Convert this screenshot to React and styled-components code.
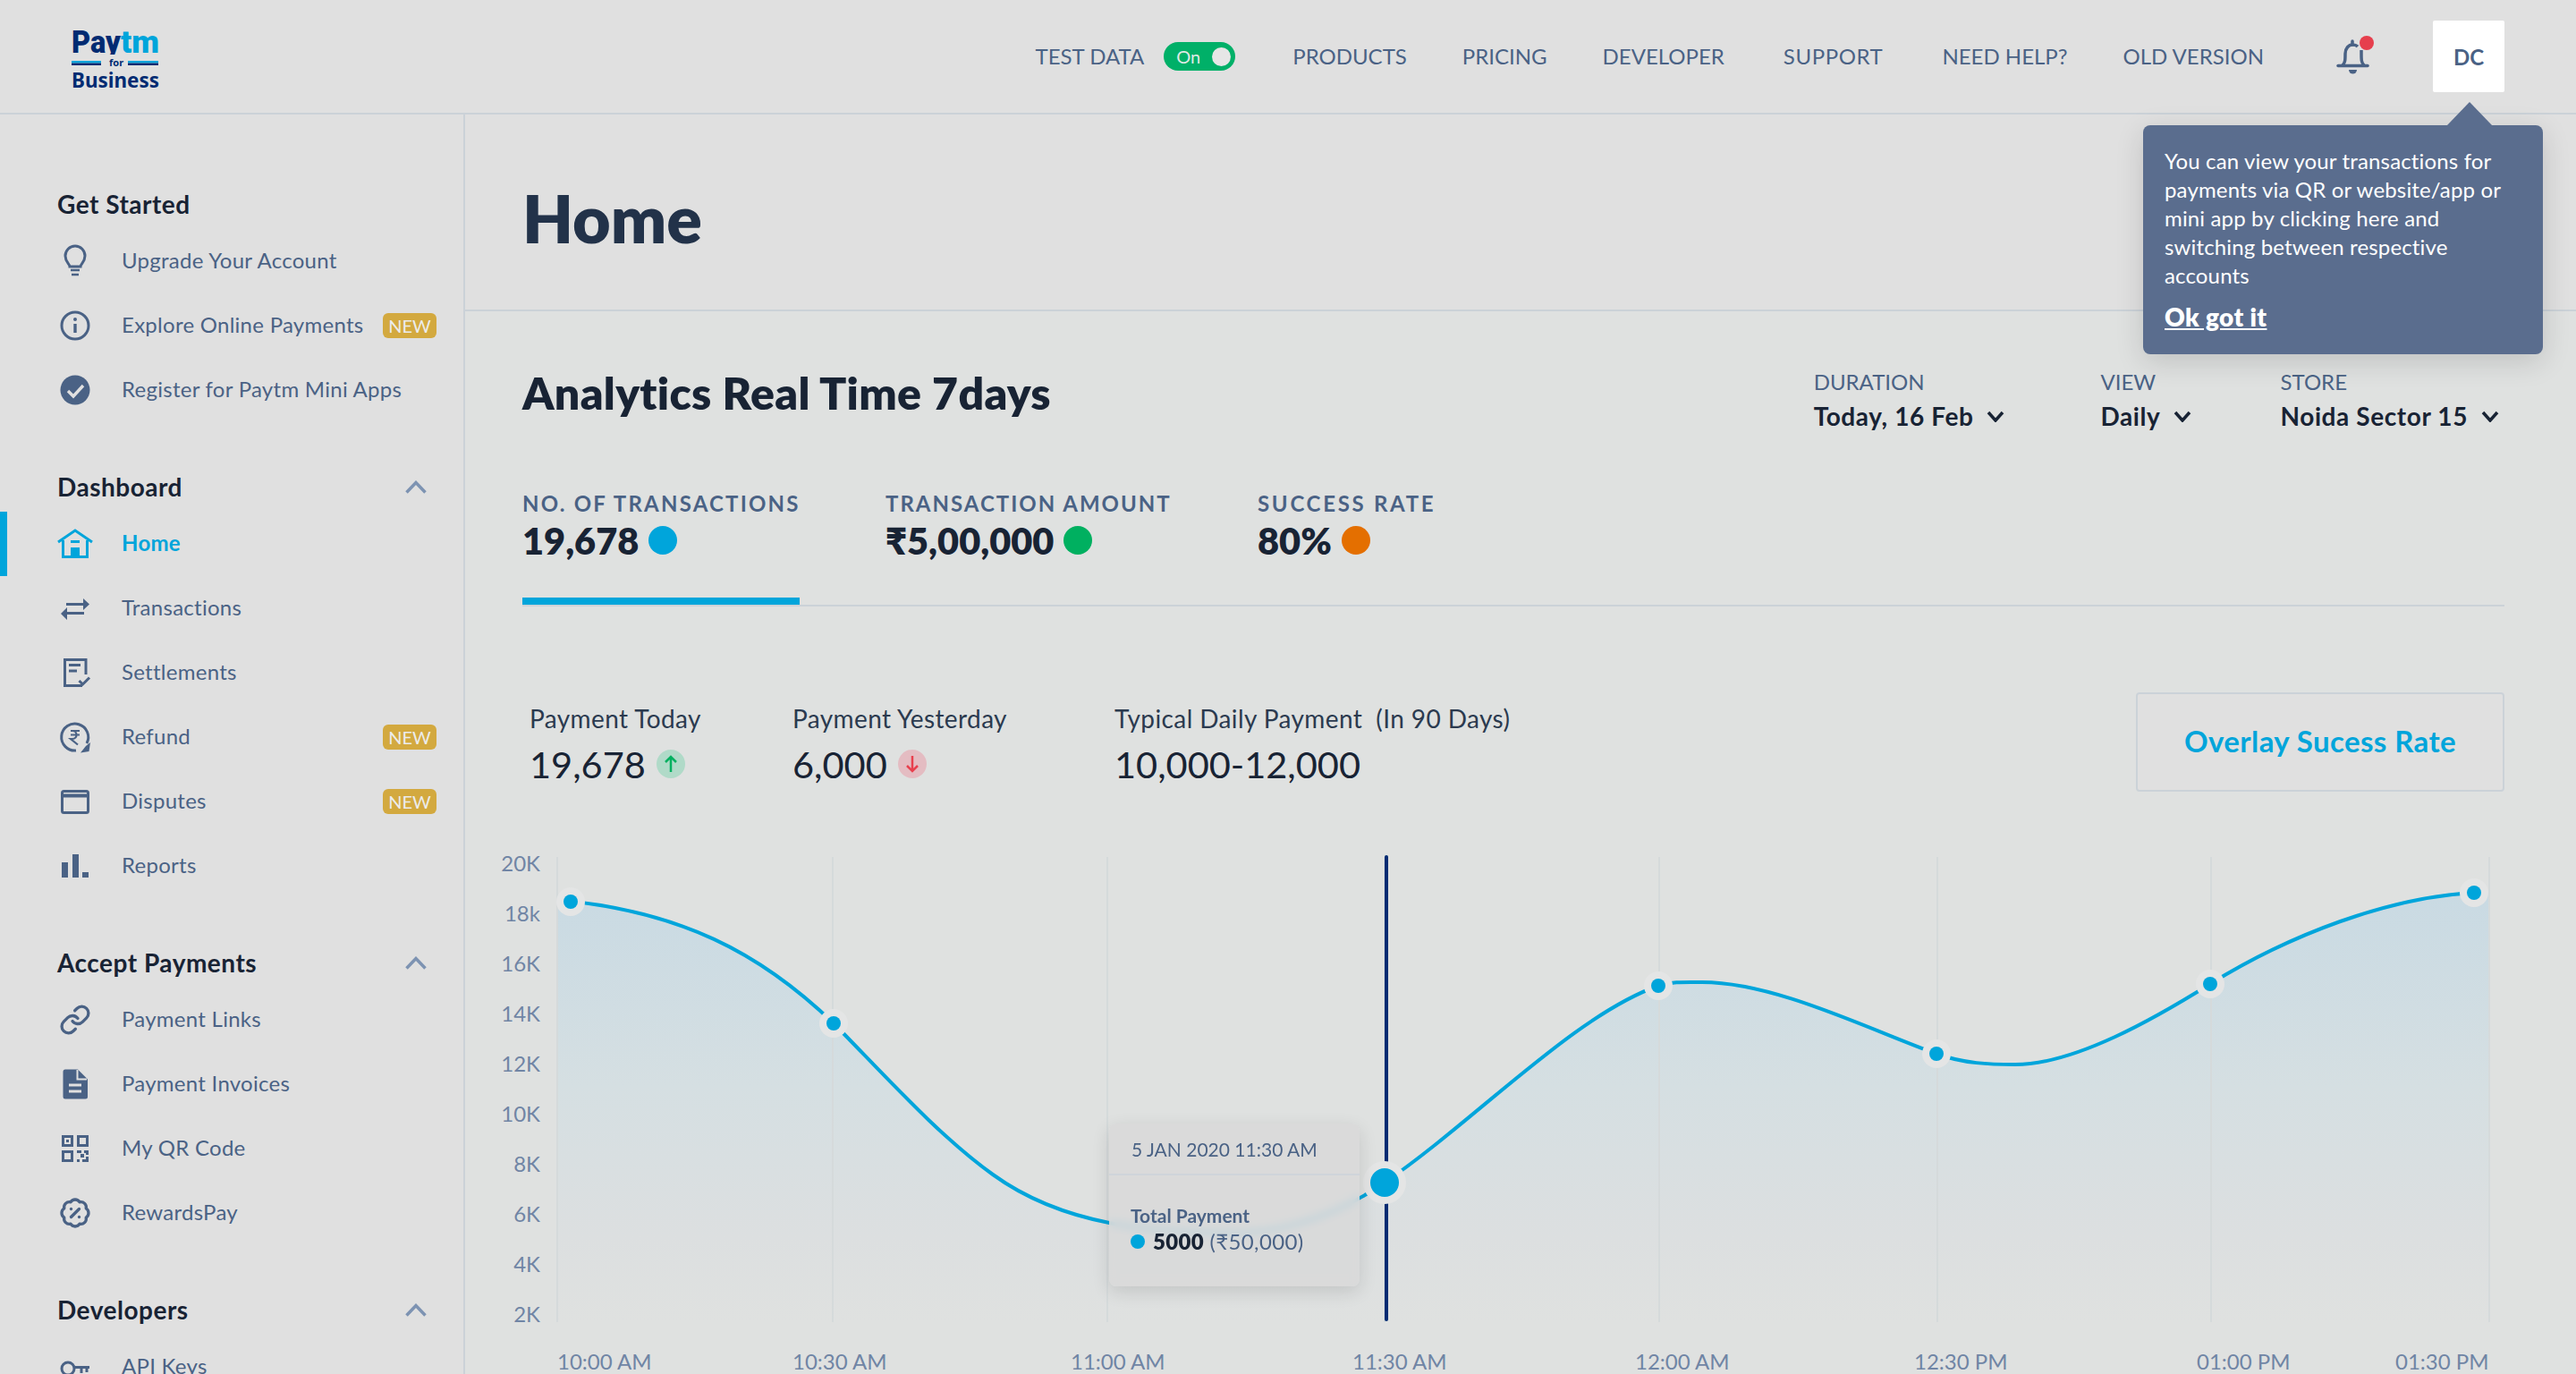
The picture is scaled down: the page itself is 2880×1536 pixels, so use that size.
import React from "react";
import styled, { createGlobalStyle } from "styled-components";
import { BadgePercent, Link as LinkIcon } from "lucide-react";

const FONT = `"Lato", "Noto Sans", "Liberation Sans", sans-serif`;
const SLATE = "#4a6285";
const INK = "#182334";
const BLUE = "#00a5db";
const NAVY = "#012b72";
const RULE = "#cbd2d8";

const GlobalStyle = createGlobalStyle`
  html, body {
    margin: 0;
    height: 1536px;
    overflow: hidden;
    background: #e0e0e0;
    font-family: ${FONT};
  }
  * { box-sizing: border-box; }
`;

const Page = styled.div`
  position: relative;
  width: 2880px;
  height: 1536px;
  overflow: hidden;
  background: #e0e0e0;
`;

/* ---------- top bar ---------- */

const TopBar = styled.header`
  display: flex;
  align-items: center;
  height: 128px;
  padding: 0 80px;
  border-bottom: 2px solid ${RULE};
`;

const LogoMark = styled.svg`
  display: block;
  width: 100px;
  height: 88px;
  margin-top: 4px;
`;

const NavLinks = styled.nav`
  display: flex;
  align-items: center;
  gap: 62px;
  margin-left: auto;
`;

const NavItem = styled.span`
  margin-left: ${(p) => p.$ml || 0}px;
  font-size: 24px;
  line-height: 32px;
  color: ${SLATE};
  letter-spacing: ${(p) => p.$ls || 0}px;
  white-space: nowrap;
`;

const TestData = styled.div`
  display: flex;
  align-items: center;
  gap: 22px;
`;

const Toggle = styled.div`
  display: flex;
  align-items: center;
  justify-content: space-between;
  width: 80px;
  height: 32px;
  padding: 0 5px 0 14px;
  border-radius: 16px;
  background: #00b068;
  color: #dfe9e4;
  font-size: 20px;

  &::after {
    content: "";
    width: 21px;
    height: 21px;
    border-radius: 50%;
    background: #e6e6e6;
  }
`;

const BellWrap = styled.div`
  display: flex;
  margin-left: 81px;
`;

const Avatar = styled.div`
  display: flex;
  align-items: center;
  justify-content: center;
  width: 80px;
  height: 80px;
  margin-left: 64px;
  border-radius: 2px;
  background: #fff;
  color: ${SLATE};
  font-size: 24px;
  font-weight: 700;
`;

/* ---------- coach mark ---------- */

const CoachMark = styled.aside`
  position: absolute;
  top: 140px;
  left: 2396px;
  width: 447px;
  height: 256px;
  padding: 24px;
  border-radius: 8px;
  background: #5a6d8e;
  color: #fff;
  font-size: 24px;
  line-height: 32px;
  letter-spacing: 0.15px;
  box-shadow: 0 8px 32px rgba(0, 0, 0, 0.14);

  &::before {
    content: "";
    position: absolute;
    top: -26px;
    left: 340px;
    border-left: 25px solid transparent;
    border-right: 25px solid transparent;
    border-bottom: 26px solid #5a6d8e;
  }
`;

const CoachLink = styled.a`
  display: block;
  margin-top: 14px;
  font-size: 28px;
  font-weight: 800;
  letter-spacing: 0.4px;
  color: #fff;
  text-decoration: underline;
`;

/* ---------- sidebar ---------- */

const Body = styled.div`
  display: flex;
  height: 1408px;
`;

const Sidebar = styled.aside`
  flex: none;
  width: 520px;
  padding-top: 82px;
  border-right: 2px solid ${RULE};
`;

const Section = styled.section`
  margin-bottom: 54px;
`;

const SectionTitle = styled.h3`
  display: flex;
  align-items: center;
  justify-content: space-between;
  height: 36px;
  margin: 0 0 10px;
  padding: 0 41px 0 64px;
  font-size: 28px;
  font-weight: 700;
  letter-spacing: 0.5px;
  color: ${INK};
`;

const MenuRow = styled.div`
  display: flex;
  align-items: center;
  height: 72px;
  padding: 0 30px 0 64px;
  box-shadow: ${(p) => (p.$active ? `inset 8px 0 0 ${BLUE}` : "none")};
  color: ${(p) => (p.$active ? BLUE : SLATE)};
  font-size: 24px;
  font-weight: ${(p) => (p.$active ? 700 : 400)};
`;

const MenuIcon = styled.span`
  flex: none;
  display: flex;
  align-items: center;
  justify-content: center;
  width: 40px;
  height: 40px;
  margin-right: 32px;
`;

const MenuLabel = styled.span`
  padding-bottom: 3px;
  letter-spacing: 0.27px;
  white-space: nowrap;
`;

const NewBadge = styled.span`
  flex: none;
  width: 60px;
  height: 28px;
  margin-left: auto;
  border-radius: 6px;
  background: #d3a93f;
  color: #ececec;
  font-size: 20px;
  font-weight: 400;
  line-height: 28px;
  text-align: center;
`;

const Icon = styled.svg`
  display: block;
  width: 40px;
  height: 40px;
  fill: none;
  stroke: currentColor;
  stroke-width: 3;
`;

/* ---------- main ---------- */

const Main = styled.main`
  flex: 1;
  min-width: 0;
  background: #dfe1e0;
`;

const TitleBar = styled.div`
  display: flex;
  align-items: center;
  height: 220px;
  padding: 12px 0 0 64px;
  border-bottom: 2px solid ${RULE};
  background: #e0e0e0;
`;

const PageTitle = styled.h1`
  margin: 0;
  font-size: 73.5px;
  font-weight: 800;
  color: #223249;
`;

const Content = styled.div`
  padding: 63px 80px 0 64px;
`;

const AnalyticsHead = styled.div`
  display: flex;
  align-items: flex-start;
  justify-content: space-between;
`;

const AnalyticsTitle = styled.h2`
  margin: 0;
  font-size: 50px;
  line-height: 56px;
  font-weight: 800;
  letter-spacing: 0.3px;
  color: ${INK};
`;

const Filters = styled.div`
  display: flex;
  padding-right: 6px;
`;

const Filter = styled.div`
  margin-right: ${(p) => p.$mr || 0}px;
`;

const FilterLabel = styled.div`
  font-size: 24px;
  line-height: 32px;
  color: ${SLATE};
  margin-bottom: 2px;
`;

const FilterValue = styled.div`
  display: flex;
  align-items: center;
  gap: 15px;
  font-size: 28px;
  line-height: 40px;
  font-weight: 700;
  letter-spacing: 0.6px;
  color: ${INK};
`;

const Chevron = styled.svg`
  display: block;
  width: ${(p) => p.$w}px;
  height: ${(p) => p.$h}px;
  fill: none;
  stroke: ${(p) => p.$color};
  stroke-width: 3.5;
`;

const Tabs = styled.div`
  display: flex;
  margin-top: 62px;
  border-bottom: 2px solid ${RULE};
`;

const Tab = styled.div`
  width: ${(p) => p.$w}px;
`;

const TabInner = styled.div`
  width: ${(p) => (p.$active ? "310px" : "auto")};
  padding-bottom: ${(p) => (p.$active ? 40 : 48)}px;
  border-bottom: ${(p) => (p.$active ? `8px solid ${BLUE}` : "none")};
`;

const TabLabel = styled.div`
  font-size: 24px;
  line-height: 32px;
  font-weight: 700;
  letter-spacing: ${(p) => p.$ls}px;
  color: ${SLATE};
  white-space: nowrap;
`;

const TabValue = styled.div`
  display: flex;
  align-items: center;
  gap: 11px;
  margin-top: 1px;
  font-size: 41.5px;
  line-height: 48px;
  font-weight: 800;
  color: ${INK};
`;

const Dot = styled.span`
  flex: none;
  width: 32px;
  height: 32px;
  border-radius: 50%;
  background: ${(p) => p.$color};
`;

const PaymentRow = styled.div`
  display: flex;
  justify-content: space-between;
  margin-top: 96px;
`;

const PaymentStats = styled.div`
  display: grid;
  grid-template-columns: 294px 360px auto;
  padding: 11px 0 0 8px;
`;

const StatLabel = styled.div`
  font-size: 28px;
  line-height: 36px;
  letter-spacing: 0.4px;
  color: #2b3a4f;
  white-space: pre;
`;

const StatValue = styled.div`
  display: flex;
  align-items: center;
  gap: 12px;
  margin-top: 9px;
  font-size: 41.5px;
  line-height: 48px;
  color: ${INK};
`;

const TrendBadge = styled.span`
  flex: none;
  display: flex;
  align-items: center;
  justify-content: center;
  width: 32px;
  height: 32px;
  border-radius: 50%;
  background: ${(p) => (p.$up ? "#b0dac8" : "#e4bcc2")};
  color: ${(p) => (p.$up ? "#00b060" : "#e8404e")};
`;

const TrendArrow = styled.svg`
  display: block;
  width: 20px;
  height: 22px;
  fill: none;
  stroke: currentColor;
  stroke-width: 2.5;
`;

const OverlayButton = styled.button`
  width: 412px;
  height: 111px;
  padding: 0 0 3px;
  border: 2px solid ${RULE};
  border-radius: 4px;
  background: #e0e0e0;
  color: ${BLUE};
  font-family: inherit;
  font-size: 33px;
  font-weight: 700;
  letter-spacing: 0.4px;
`;

/* ---------- chart ---------- */

const ChartWrap = styled.div`
  position: relative;
  width: 2300px;
  height: 586px;
  margin: 65px 0 0 -44px;
`;

const ChartSvg = styled.svg`
  display: block;
  width: 2300px;
  height: 586px;
  font-family: ${FONT};
`;

const AxisText = styled.text`
  font-size: 24px;
  fill: #7085a5;
`;

const ChartTip = styled.div`
  position: absolute;
  top: 306px;
  left: 700px;
  width: 280px;
  height: 182px;
  border-radius: 8px;
  background: rgba(217, 217, 217, 0.86);
  backdrop-filter: blur(5px);
  box-shadow: 0 6px 20px rgba(0, 0, 0, 0.12);
`;

const TipHead = styled.div`
  height: 58px;
  padding-left: 25px;
  border-bottom: 2px solid #cfd4da;
  color: ${SLATE};
  font-size: 21px;
  line-height: 58px;
`;

const TipBody = styled.div`
  padding: 32px 0 0 24px;
`;

const TipLabel = styled.div`
  color: ${SLATE};
  font-size: 21px;
  font-weight: 700;
  line-height: 26px;
`;

const TipValue = styled.div`
  display: flex;
  align-items: center;
  gap: 9px;
  color: ${SLATE};
  font-size: 24px;
  line-height: 32px;
  letter-spacing: 0.35px;
`;

const TipDot = styled.span`
  width: 16px;
  height: 16px;
  border-radius: 50%;
  background: ${BLUE};
`;

const TipStrong = styled.b`
  color: ${INK};
  font-weight: 800;
`;

/* ---------- icons ---------- */

const IconBulb = () => (
  <Icon viewBox="0 0 40 40">
    <path d="M14 26c0-3-5-5-5-12a11 11 0 0 1 22 0c0 7-5 9-5 12z" />
    <path d="M15 30h10M16 35h8" strokeWidth="2.6" />
  </Icon>
);

const IconInfo = () => (
  <Icon viewBox="0 0 40 40">
    <circle cx="20" cy="20" r="15" />
    <path d="M20 18v10" strokeWidth="3.4" />
    <circle cx="20" cy="13" r="1" strokeWidth="2" fill="currentColor" />
  </Icon>
);

const IconCheck = () => (
  <Icon viewBox="0 0 40 40">
    <circle cx="20" cy="20" r="16.5" fill="currentColor" stroke="none" />
    <path d="M12 21l6 6 11-12" stroke="#e0e0e0" strokeWidth="3.4" />
  </Icon>
);

const IconHome = () => (
  <Icon viewBox="0 0 40 40">
    <path d="M1 18L20 5l19 13" />
    <path d="M6.5 16v18.5h27V16" />
    <path d="M15 17.5h10" />
    <rect x="15" y="24" width="10" height="11" fill="currentColor" stroke="none" />
  </Icon>
);

const IconTransfer = () => (
  <Icon viewBox="0 0 40 40">
    <path d="M10 15.5h21M9 25.5h21" />
    <path d="M29 9l7 6.5-7 6.5zM11 19l-7 7 7 7z" fill="currentColor" stroke="none" />
  </Icon>
);

const IconSettlement = () => (
  <Icon viewBox="0 0 40 40">
    <path d="M32 22V5.5H8.5v29H28" />
    <path d="M13 11.5h13M13 18h9" />
    <path d="M24.5 29l4 4 7.5-7.5" />
  </Icon>
);

const IconRefund = () => (
  <Icon viewBox="0 0 40 40">
    <path d="M33 27A15 15 0 1 0 21 35" />
    <path d="M26 37.5l9.5-1.5L37 26l-5 4z" fill="currentColor" stroke="none" />
    <path d="M15 13h10M15 17.500h10M17 13c6 0 6 9 0 9h-2l8 6.500" strokeWidth="2.2" />
  </Icon>
);

const IconCard = () => (
  <Icon viewBox="0 0 40 40">
    <rect x="5.5" y="8.5" width="29" height="24" rx="2" />
    <path d="M5.5 13.5h29" strokeWidth="4" />
  </Icon>
);

const IconBars = () => (
  <Icon viewBox="0 0 40 40" style={{ stroke: "none", fill: "currentColor" }}>
    <path d="M5 16h7v17H5zM17 7h7v26h-7zM28 27h7v6h-7z" />
  </Icon>
);

const IconInvoice = () => (
  <Icon viewBox="0 0 40 40">
    <path
      d="M9 3.5h14l11 11V34a2.500 2.500 0 0 1-2.500 2.500H9A2.500 2.500 0 0 1 6.500 34V6A2.500 2.500 0 0 1 9 3.500z"
      fill="currentColor"
      stroke="none"
    />
    <path d="M22.500 4v10.500H33" stroke="#e0e0e0" strokeWidth="2" />
    <path d="M13 21h14M13 28h14" stroke="#e0e0e0" strokeWidth="3" />
  </Icon>
);

const IconQr = () => (
  <Icon viewBox="0 0 40 40">
    <path d="M6.500 6.500h10v10h-10zM23.500 6.500h10v10h-10zM6.500 23.500h10v10h-10z" />
    <path d="M10 10h3v3h-3z" fill="currentColor" stroke="none" />
    <path
      d="M22 22h5v3h-5zM30 22h5v5h-3v-2h-2zM26 26h4v4h-4zM22 32h3v3h-3zM28 32h7v3h-7zM32 29h3v3h-3z"
      fill="currentColor"
      stroke="none"
    />
  </Icon>
);

const IconKey = () => (
  <Icon viewBox="0 0 40 40">
    <circle cx="12" cy="22" r="7" />
    <path d="M18 20.500h18M27 20v7M33 20v6" />
  </Icon>
);

const ChevronUp = () => (
  <Chevron $w={24} $h={15} $color="#7d93b2" viewBox="0 0 24 15">
    <path d="M1.500 13.500L12 2.500l10.500 11" />
  </Chevron>
);

const ChevronDown = () => (
  <Chevron $w={20} $h={13} $color={INK} viewBox="0 0 20 13">
    <path d="M2 2l8 9 8-9" />
  </Chevron>
);

const Bell = () => (
  <svg width="44" height="46" viewBox="0 0 44 46" fill="none">
    <path
      d="M7 33c3-3 3-6 3-13 0-6 4-10 8-10 2 0 4 0 6 2M28 16v4c0 7 0 10 3 13"
      stroke={SLATE}
      strokeWidth="3.500"
    />
    <path d="M2 33.500h33" stroke={SLATE} strokeWidth="3.500" strokeLinecap="round" />
    <path d="M14 38h9a4.500 4.500 0 0 1-9 0z" fill={SLATE} />
    <path d="M18 10V6" stroke={SLATE} strokeWidth="3.500" strokeLinecap="round" />
    <circle cx="34" cy="8" r="8" fill="#e63f4d" />
  </svg>
);

const Logo = () => (
  <LogoMark viewBox="0 -8 100 88">
    <defs>
      <clipPath id="wordmark">
        <rect x="0" y="-8" width="100" height="40" />
      </clipPath>
    </defs>
    <g clipPath="url(#wordmark)" fontFamily="Roboto, sans-serif" fontWeight="900" fontSize="35">
      <text x="0" y="30" textLength="55" lengthAdjust="spacingAndGlyphs" fill={NAVY}>
        Pay
      </text>
      <text x="55" y="30" textLength="43" lengthAdjust="spacingAndGlyphs" fill={BLUE}>
        tm
      </text>
    </g>
    <rect x="0" y="39" width="33" height="2.500" fill={BLUE} />
    <rect x="0" y="41.500" width="33" height="2.500" fill={NAVY} />
    <rect x="63" y="39" width="34" height="2.500" fill={BLUE} />
    <rect x="63" y="41.500" width="34" height="2.500" fill={NAVY} />
    <text x="42" y="45" fontFamily="Noto Sans, sans-serif" fontWeight="700" fontSize="11" fill={NAVY}>
      for
    </text>
    <text
      x="0"
      y="69"
      fontFamily="Noto Sans, sans-serif"
      fontWeight="700"
      fontSize="24"
      textLength="98"
      lengthAdjust="spacingAndGlyphs"
      fill={NAVY}
    >
      Business
    </text>
  </LogoMark>
);

/* ---------- data ---------- */

const menu = [
  {
    title: "Get Started",
    items: [
      { label: "Upgrade Your Account", icon: <IconBulb /> },
      { label: "Explore Online Payments", icon: <IconInfo />, isNew: true },
      { label: "Register for Paytm Mini Apps", icon: <IconCheck /> },
    ],
  },
  {
    title: "Dashboard",
    collapsible: true,
    items: [
      { label: "Home", icon: <IconHome />, active: true },
      { label: "Transactions", icon: <IconTransfer /> },
      { label: "Settlements", icon: <IconSettlement /> },
      { label: "Refund", icon: <IconRefund />, isNew: true },
      { label: "Disputes", icon: <IconCard />, isNew: true },
      { label: "Reports", icon: <IconBars /> },
    ],
  },
  {
    title: "Accept Payments",
    collapsible: true,
    items: [
      { label: "Payment Links", icon: <LinkIcon size={36} strokeWidth={2.2} /> },
      { label: "Payment Invoices", icon: <IconInvoice /> },
      { label: "My QR Code", icon: <IconQr /> },
      { label: "RewardsPay", icon: <BadgePercent size={36} strokeWidth={2.2} /> },
    ],
  },
  {
    title: "Developers",
    collapsible: true,
    items: [{ label: "API Keys", icon: <IconKey /> }],
  },
];

const yTicks = ["20K", "18k", "16K", "14K", "12K", "10K", "8K", "6K", "4K", "2K"];
const xTicks = [
  ["10:00 AM", 623],
  ["10:30 AM", 886],
  ["11:00 AM", 1197],
  ["11:30 AM", 1512],
  ["12:00 AM", 1828],
  ["12:30 PM", 2140],
  ["01:00 PM", 2456],
  ["01:30 PM", 2678],
];
const gridX = [623, 931, 1238, 1548, 1855, 2166, 2472, 2783];
const markers = [
  [638, 1008],
  [932, 1144],
  [1854, 1102],
  [2165, 1178],
  [2471, 1100],
  [2766, 998],
];

const linePath =
  "M623 1006C760 1018 850 1065 932 1144" +
  "C991 1204 1050 1270 1110 1313" +
  "C1190 1371 1290 1378 1380 1378" +
  "C1440 1378 1500 1355 1548 1322" +
  "C1650 1252 1760 1135 1854 1102" +
  "C1870 1097 1885 1098 1903 1098" +
  "C1985 1098 2090 1151 2165 1178" +
  "C2195 1189 2225 1190 2253 1190" +
  "C2320 1190 2410 1138 2471 1100" +
  "C2560 1045 2670 1003 2766 998";
const areaPath = `${linePath}L2783 997V1478H623Z`;

function Chart() {
  return (
    <ChartWrap>
      <ChartSvg viewBox="540 950 2300 586">
        <defs>
          <linearGradient id="area" gradientUnits="userSpaceOnUse" x1="0" y1="998" x2="0" y2="1478">
            <stop offset="0" stopColor="#c9dae3" />
            <stop offset="0.45" stopColor="#d5dfe2" />
            <stop offset="0.8" stopColor="#dcdfe0" />
            <stop offset="1" stopColor="#dfe1e0" />
          </linearGradient>
        </defs>
        {yTicks.map((t, i) => (
          <AxisText key={t} x="604" y={974 + i * 56} textAnchor="end">
            {t}
          </AxisText>
        ))}
        {xTicks.map(([t, x]) => (
          <AxisText key={t} x={x} y="1531">
            {t}
          </AxisText>
        ))}
        <path d={areaPath} fill="url(#area)" />
        {gridX.map((x) => (
          <line key={x} x1={x} x2={x} y1="958" y2="1478" stroke="#d5dadb" strokeWidth="2" />
        ))}
        <path d={linePath} fill="none" stroke={BLUE} strokeWidth="4" />
        <line x1="1550" x2="1550" y1="958" y2="1475" stroke={NAVY} strokeWidth="4" strokeLinecap="round" />
        {markers.map(([x, y]) => (
          <g key={x}>
            <circle cx={x} cy={y} r="16" fill="#e4e5e5" />
            <circle cx={x} cy={y} r="8" fill={BLUE} />
          </g>
        ))}
        <circle cx="1548" cy="1322" r="24" fill="#e4e5e5" />
        <circle cx="1548" cy="1322" r="16" fill={BLUE} />
      </ChartSvg>
      <ChartTip>
        <TipHead>5 JAN 2020 11:30 AM</TipHead>
        <TipBody>
          <TipLabel>Total Payment</TipLabel>
          <TipValue>
            <TipDot />
            <span>
              <TipStrong>5000</TipStrong> (₹50,000)
            </span>
          </TipValue>
        </TipBody>
      </ChartTip>
    </ChartWrap>
  );
}

export default function App() {
  return (
    <Page>
      <GlobalStyle />
      <TopBar>
        <Logo />
        <NavLinks>
          <TestData>
            <NavItem>TEST DATA</NavItem>
            <Toggle>On</Toggle>
          </TestData>
          <NavItem $ml={2}>PRODUCTS</NavItem>
          <NavItem>PRICING</NavItem>
          <NavItem>DEVELOPER</NavItem>
          <NavItem $ml={4} $ls={0.6}>
            SUPPORT
          </NavItem>
          <NavItem $ml={4}>NEED HELP?</NavItem>
          <NavItem>OLD VERSION</NavItem>
        </NavLinks>
        <BellWrap>
          <Bell />
        </BellWrap>
        <Avatar>DC</Avatar>
      </TopBar>

      <Body>
        <Sidebar>
          {menu.map((section) => (
            <Section key={section.title}>
              <SectionTitle>
                {section.title}
                {section.collapsible && <ChevronUp />}
              </SectionTitle>
              {section.items.map((item) => (
                <MenuRow key={item.label} $active={item.active}>
                  <MenuIcon>{item.icon}</MenuIcon>
                  <MenuLabel>{item.label}</MenuLabel>
                  {item.isNew && <NewBadge>NEW</NewBadge>}
                </MenuRow>
              ))}
            </Section>
          ))}
        </Sidebar>

        <Main>
          <TitleBar>
            <PageTitle>Home</PageTitle>
          </TitleBar>
          <Content>
            <AnalyticsHead>
              <AnalyticsTitle>Analytics Real Time 7days</AnalyticsTitle>
              <Filters>
                <Filter $mr={107}>
                  <FilterLabel>DURATION</FilterLabel>
                  <FilterValue>
                    Today, 16 Feb <ChevronDown />
                  </FilterValue>
                </Filter>
                <Filter $mr={99}>
                  <FilterLabel>VIEW</FilterLabel>
                  <FilterValue>
                    Daily <ChevronDown />
                  </FilterValue>
                </Filter>
                <Filter>
                  <FilterLabel>STORE</FilterLabel>
                  <FilterValue>
                    Noida Sector 15 <ChevronDown />
                  </FilterValue>
                </Filter>
              </Filters>
            </AnalyticsHead>

            <Tabs>
              <Tab $w={406}>
                <TabInner $active>
                  <TabLabel $ls={2.2}>NO. OF TRANSACTIONS</TabLabel>
                  <TabValue>
                    19,678 <Dot $color={BLUE} />
                  </TabValue>
                </TabInner>
              </Tab>
              <Tab $w={416}>
                <TabInner>
                  <TabLabel $ls={2}>TRANSACTION AMOUNT</TabLabel>
                  <TabValue>
                    ₹5,00,000 <Dot $color="#00b060" />
                  </TabValue>
                </TabInner>
              </Tab>
              <Tab>
                <TabInner>
                  <TabLabel $ls={2.7}>SUCCESS RATE</TabLabel>
                  <TabValue>
                    80% <Dot $color="#e46f00" />
                  </TabValue>
                </TabInner>
              </Tab>
            </Tabs>

            <PaymentRow>
              <PaymentStats>
                <div>
                  <StatLabel>Payment Today</StatLabel>
                  <StatValue>
                    19,678
                    <TrendBadge $up>
                      <TrendArrow viewBox="0 0 20 22">
                        <path d="M10 20V3M4 9l6-6 6 6" />
                      </TrendArrow>
                    </TrendBadge>
                  </StatValue>
                </div>
                <div>
                  <StatLabel>Payment Yesterday</StatLabel>
                  <StatValue>
                    6,000
                    <TrendBadge>
                      <TrendArrow viewBox="0 0 20 22">
                        <path d="M10 2v17M4 13l6 6 6-6" />
                      </TrendArrow>
                    </TrendBadge>
                  </StatValue>
                </div>
                <div>
                  <StatLabel>{"Typical Daily Payment  (In 90 Days)"}</StatLabel>
                  <StatValue>10,000-12,000</StatValue>
                </div>
              </PaymentStats>
              <OverlayButton>Overlay Sucess Rate</OverlayButton>
            </PaymentRow>

            <Chart />
          </Content>
        </Main>
      </Body>

      <CoachMark>
        You can view your transactions for payments via QR or website/app or mini app by clicking here and switching
        between respective accounts
        <CoachLink>Ok got it</CoachLink>
      </CoachMark>
    </Page>
  );
}
